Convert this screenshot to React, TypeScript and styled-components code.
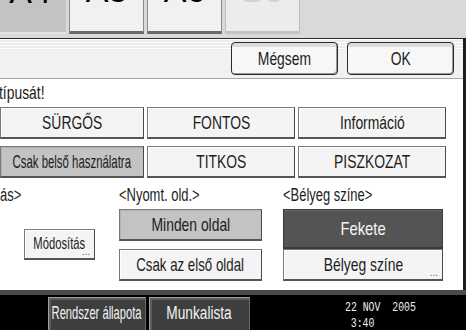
import styled, { createGlobalStyle, css } from 'styled-components';

const GlobalStyle = createGlobalStyle`
  html, body {
    margin: 0;
    padding: 0;
    background: #000;
  }
  body {
    font-family: "Liberation Sans", "DejaVu Sans", sans-serif;
    color: #1c1c1c;
  }
`;

const Screen = styled.div`
  width: 466px;
  height: 330px;
  overflow: hidden;
  display: flex;
  flex-direction: column;
  background: #000;
`;

// The device font is tall and narrow: squeeze a regular face horizontally.
const Caption = styled.span<{ $size?: number; $left?: boolean; $squeeze?: number }>`
  display: inline-block;
  white-space: nowrap;
  font-size: ${({ $size }) => $size ?? 19}px;
  transform: scaleX(${({ $squeeze }) => $squeeze ?? 0.73});
  transform-origin: ${({ $left }) => ($left ? 'left center' : 'center')};
`;

const TabStrip = styled.div`
  height: 38px;
  flex: none;
  background: #d9d9d9;
  display: flex;
  align-items: flex-start;
  gap: 3px;
  overflow: hidden;
`;

const Tab = styled.div<{ $state: 'active' | 'normal' | 'disabled'; $width: number }>`
  width: ${({ $width }) => $width}px;
  height: 34px;
  box-sizing: border-box;
  display: flex;
  justify-content: center;
  align-items: flex-end;
  overflow: hidden;
  font-size: 34px;
  line-height: 1;
  ${({ $state }) =>
    $state === 'active'
      ? css`
          background: #c3c3c3;
          border-bottom: 2px solid #e4e4e4;
          color: #000;
        `
      : $state === 'normal'
      ? css`
          background: #f1f1f1;
          border-left: 1px solid #8a8a8a;
          border-right: 1px solid #8a8a8a;
          border-bottom: 3px solid #6a6a6a;
          color: #000;
        `
      : css`
          background: #ececec;
          border-left: 1px solid #bdbdbd;
          border-right: 1px solid #bdbdbd;
          border-bottom: 3px solid #c4c4c4;
          color: #d2d2d2;
        `}

  &:first-child {
    margin-left: -6px;
  }
`;

const TabLabel = styled.span`
  margin-bottom: 24px;
`;

const Panel = styled.div`
  flex: 1;
  display: flex;
  flex-direction: column;
  background: #fff;
  border-top: 1px solid #2c2c2c;
  border-right: 3px solid #1e1e1e;
  border-bottom-right-radius: 2px;
`;

const HeaderBar = styled.div`
  height: 40px;
  box-sizing: border-box;
  flex: none;
  display: flex;
  justify-content: flex-end;
  align-items: flex-start;
  gap: 9px;
  padding: 3px 9px 0 0;
  border-bottom: 1px solid #a6a6a6;
  background:
    repeating-linear-gradient(#ffffff 0 1px, #ececec 1px 3px) top / 100% 11px no-repeat,
    #f1f1f1;
`;

const buttonFace = css`
  box-sizing: border-box;
  display: flex;
  align-items: center;
  justify-content: center;
  position: relative;
`;

const DialogButton = styled.div`
  ${buttonFace};
  width: 107px;
  height: 33px;
  border: 1.5px solid #2a2a2a;
  border-radius: 4px;
  background: linear-gradient(#dcdcdc 0 4px, #f7f7f7 4px);
  box-shadow: inset -1px -1px 0 #9a9a9a;
`;

const Content = styled.div`
  flex: 1;
  display: flex;
  flex-direction: column;
`;

const Instruction = styled.div`
  line-height: 20px;
  padding: 4px 0 0 0;
  height: 28px;
  box-sizing: border-box;
  margin-left: -1px;
`;

const TypeGrid = styled.div`
  display: grid;
  grid-template-columns: 144px 148px 148px;
  grid-auto-rows: 32px;
  column-gap: 3px;
  row-gap: 7px;
`;

const OptionButton = styled.div<{ $selected?: boolean; $height?: number; $dark?: boolean }>`
  ${buttonFace};
  height: ${({ $height }) => $height ?? 32}px;
  border: 1px solid #7a7a7a;
  border-right-color: #4a4a4a;
  border-bottom: 2px solid #555;
  background: ${({ $selected }) => ($selected ? '#c3c3c3' : '#f4f4f4')};
  box-shadow: inset 1px 1px 0 ${({ $selected }) => ($selected ? '#b0b0b0' : '#ffffff')};
  ${({ $dark }) =>
    $dark &&
    css`
      background: #545454;
      color: #f4f4f4;
      border-color: #3a3a3a;
      box-shadow: inset 0 1px 0 #6a6a6a;
    `}
`;

const Dots = styled.span`
  position: absolute;
  right: 4px;
  bottom: 3px;
  font-size: 10px;
  line-height: 6px;
  color: #666;
`;

const Lower = styled.div`
  display: flex;
  margin-top: 7px;
`;

const Column = styled.div<{ $width: number; $gapLeft?: number }>`
  width: ${({ $width }) => $width}px;
  margin-left: ${({ $gapLeft }) => $gapLeft ?? 0}px;
  display: flex;
  flex-direction: column;
`;

const GroupLabel = styled.div`
  line-height: 20px;
  height: 24px;
`;

const Stack = styled.div<{ $gap: number }>`
  display: flex;
  flex-direction: column;
  gap: ${({ $gap }) => $gap}px;
`;

const ChangeButton = styled.div`
  ${buttonFace};
  width: 71px;
  height: 31px;
  margin: 20px 0 0 24px;
  border: 1px solid #7a7a7a;
  border-right-color: #4a4a4a;
  border-bottom: 2px solid #555;
  background: #f4f4f4;
  box-shadow: inset 1px 1px 0 #fff;
`;

const BottomBar = styled.div`
  height: 40px;
  flex: none;
  box-sizing: border-box;
  border-top: 5px solid #4b4b4b;
  background: #000;
  display: flex;
  align-items: flex-start;
  padding: 2px 0 0 48px;
  gap: 3px;
`;

const BarButton = styled.div<{ $width: number }>`
  width: ${({ $width }) => $width}px;
  height: 36px;
  box-sizing: border-box;
  display: flex;
  align-items: center;
  justify-content: center;
  padding-bottom: 3px;
  background: #3e3e3e;
  border: 1px solid #a0a0a0;
  border-right-color: #6a6a6a;
  box-shadow: inset 0 2px 0 #5c5c5c, inset 2px 0 0 #5c5c5c;
  color: #f2f2f2;
`;

const Clock = styled.div`
  margin-left: 92px;
  padding-top: 3px;
  font-family: "Liberation Mono", "DejaVu Sans Mono", monospace;
  font-size: 12px;
  line-height: 16px;
  color: #f2f2f2;
  white-space: pre;
  transform: scaleX(0.82);
  transform-origin: left top;
`;

const ClockTime = styled.div`
  padding-left: 7px;
`;

export default function App() {
  return (
    <>
      <GlobalStyle />
      <Screen>
        <TabStrip>
          <Tab $state="active" $width={72}>
            <TabLabel>A4</TabLabel>
          </Tab>
          <Tab $state="normal" $width={75}>
            <TabLabel>A5</TabLabel>
          </Tab>
          <Tab $state="normal" $width={75}>
            <TabLabel>A6</TabLabel>
          </Tab>
          <Tab $state="disabled" $width={75}>
            <TabLabel>B5</TabLabel>
          </Tab>
        </TabStrip>

        <Panel>
          <HeaderBar>
            <DialogButton>
              <Caption>Mégsem</Caption>
            </DialogButton>
            <DialogButton>
              <Caption>OK</Caption>
            </DialogButton>
          </HeaderBar>

          <Content>
            <Instruction>
              <Caption $left>típusát!</Caption>
            </Instruction>
            <TypeGrid>
              <OptionButton>
                <Caption>SÜRGŐS</Caption>
              </OptionButton>
              <OptionButton>
                <Caption>FONTOS</Caption>
              </OptionButton>
              <OptionButton>
                <Caption>Információ</Caption>
              </OptionButton>
              <OptionButton $selected>
                <Caption $squeeze={0.6}>Csak belső használatra</Caption>
              </OptionButton>
              <OptionButton>
                <Caption>TITKOS</Caption>
              </OptionButton>
              <OptionButton>
                <Caption>PISZKOZAT</Caption>
              </OptionButton>
            </TypeGrid>

            <Lower>
              <Column $width={119}>
                <GroupLabel>
                  <Caption $left $size={18} $squeeze={0.72}>ás&gt;</Caption>
                </GroupLabel>
                <ChangeButton>
                  <Caption $size={17} $squeeze={0.66}>Módosítás</Caption>
                  <Dots>...</Dots>
                </ChangeButton>
              </Column>
              <Column $width={143}>
                <GroupLabel>
                  <Caption $left $size={18} $squeeze={0.72}>&lt;Nyomt. old.&gt;</Caption>
                </GroupLabel>
                <Stack $gap={8}>
                  <OptionButton $selected>
                    <Caption>Minden oldal</Caption>
                  </OptionButton>
                  <OptionButton>
                    <Caption $squeeze={0.7}>Csak az első oldal</Caption>
                  </OptionButton>
                </Stack>
              </Column>
              <Column $width={160} $gapLeft={21}>
                <GroupLabel>
                  <Caption $left $size={18} $squeeze={0.72}>&lt;Bélyeg színe&gt;</Caption>
                </GroupLabel>
                <Stack $gap={0}>
                  <OptionButton $dark $height={40}>
                    <Caption $squeeze={0.78}>Fekete</Caption>
                  </OptionButton>
                  <OptionButton>
                    <Caption>Bélyeg színe</Caption>
                    <Dots>...</Dots>
                  </OptionButton>
                </Stack>
              </Column>
            </Lower>
          </Content>
        </Panel>

        <BottomBar>
          <BarButton $width={98}>
            <Caption $size={18} $squeeze={0.62}>Rendszer állapota</Caption>
          </BarButton>
          <BarButton $width={101}>
            <Caption $size={18} $squeeze={0.76}>Munkalista</Caption>
          </BarButton>
          <Clock>
            <div>22 NOV  2005</div>
            <ClockTime>3:40</ClockTime>
          </Clock>
        </BottomBar>
      </Screen>
    </>
  );
}
